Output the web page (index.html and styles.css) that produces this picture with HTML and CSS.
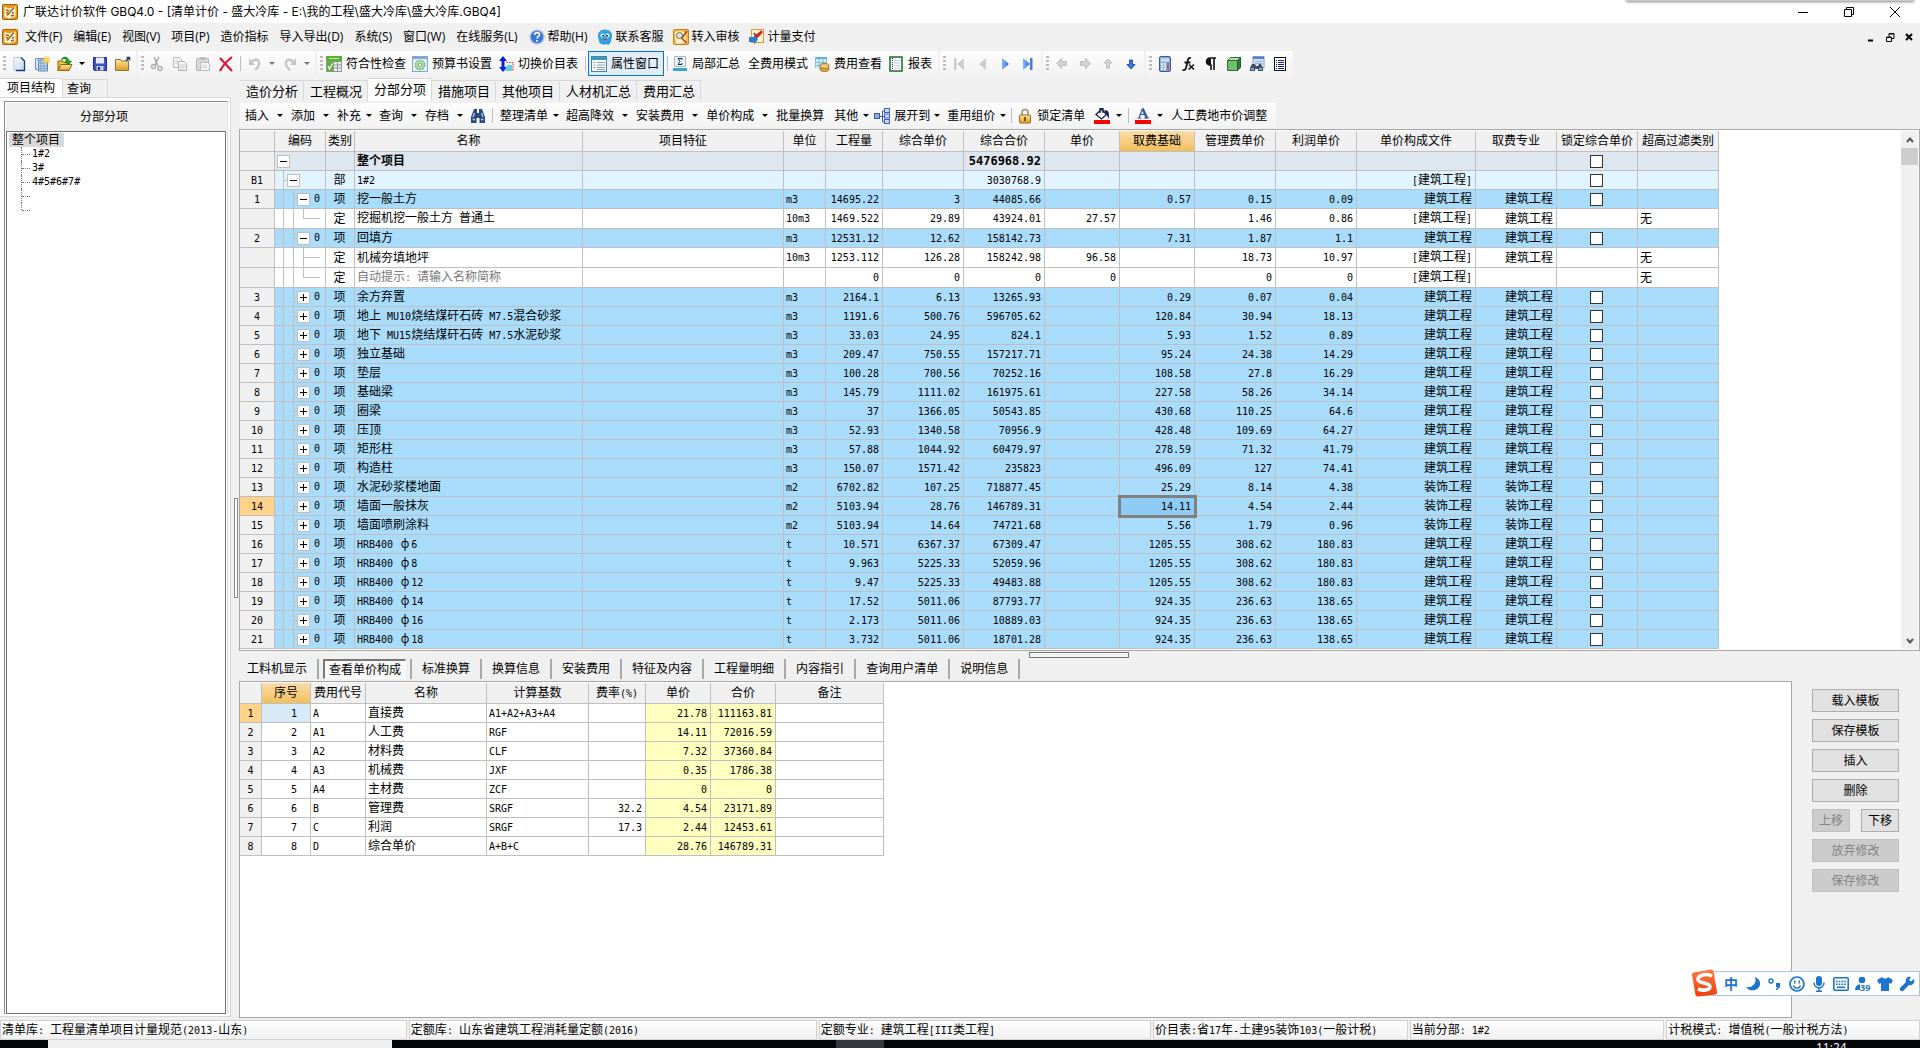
FILE: index.html
```html
<!DOCTYPE html>
<html lang="zh-CN">
<head>
<meta charset="utf-8">
<title>广联达计价软件 GBQ4.0</title>
<link rel="stylesheet" href="styles.css">
</head>
<body>
<svg class="sprite" aria-hidden="true">
  <defs>
    <linearGradient id="g-paper" x1="0" y1="0" x2="1" y2="1"><stop offset="0" stop-color="#fff"/><stop offset="1" stop-color="#b9d3ee"/></linearGradient>
    <linearGradient id="g-gold" x1="0" y1="0" x2="0" y2="1"><stop offset="0" stop-color="#ffe9a0"/><stop offset="1" stop-color="#dc9a20"/></linearGradient>
    <linearGradient id="g-blue" x1="0" y1="0" x2="1" y2="0"><stop offset="0" stop-color="#8cb8ff"/><stop offset="1" stop-color="#2f62d8"/></linearGradient>
    <linearGradient id="g-logo" x1="0" y1="0" x2="0" y2="1"><stop offset="0" stop-color="#ff7a45"/><stop offset="1" stop-color="#ee3f0a"/></linearGradient>
  </defs>
  <symbol id="app" viewBox="0 0 16 16"><rect x=".5" y=".5" width="15" height="15" rx="1" fill="#e8951c" stroke="#a85f08"/><path d="M2.500 3l5 1.500 6-2v10l-6 2-5-1.500z" fill="#fff6dc"/><path d="M4 6l3 .8M4 8.500l2 .6M5 11.500l7-8M9 12l3-1M10 9l2-.5" stroke="#9a5a10" stroke-width="1.400" fill="none"/></symbol>
  <symbol id="new" viewBox="0 0 16 16"><path d="M3 1.500h7l3.500 3.500v9.500H3z" fill="url(#g-paper)" stroke="#b5c4d6"/><path d="M10 1.500l3.500 3.500v9.500H5" fill="none" stroke="#173f73" stroke-width="1.300"/></symbol>
  <symbol id="newp" viewBox="0 0 16 16"><path d="M1.500 2.500h9v11h-9z" fill="#dbe8f7" stroke="#6d8fbe"/><path d="M4.500 4h9v11h-9z" fill="#c5d9f0" stroke="#5b7fb3"/><path d="M7 4v11M10 4v11M4 7h9M4 10h9M4 12.500h9" stroke="#7d9fd0"/><path d="M12.500 0v8M8.500 4h8M9.700 1.200l5.600 5.600M15.300 1.200L9.700 6.800" stroke="#ffd24a" stroke-width="1.500"/></symbol>
  <symbol id="open" viewBox="0 0 16 16"><path d="M1 14.500V5h5l1 1.500h5V9" fill="#f2c043" stroke="#8a6414"/><path d="M1 14.500L4 8.500h11l-3 6z" fill="url(#g-gold)" stroke="#8a6414"/><path d="M4 4c2-4 7-4 8 1h2.500L11 9 8 5h2C9 2.500 6.500 2 4 4z" fill="#21a321" stroke="#0c6b0c" stroke-width=".6"/></symbol>
  <symbol id="save" viewBox="0 0 16 16"><path d="M1.500 1.500h13v13h-12l-1-1z" fill="#3d52c4" stroke="#1d2c86"/><path d="M4 1.500h8v6H4z" fill="#e7ecf8"/><path d="M4.500 10h7v4.500h-7z" fill="#c9cfe4"/><path d="M6 11h2v3H6z" fill="#1d2c86"/></symbol>
  <symbol id="folder" viewBox="0 0 16 16"><path d="M.5 3.500h5l1 1.500h7v9.500H.5z" fill="url(#g-gold)" stroke="#94752b"/><path d="M11 5l3-3.500M11.500 1.500h3v3" stroke="#263a66" stroke-width="1.500" fill="none"/></symbol>
  <symbol id="cut" viewBox="0 0 16 16"><path d="M5 1l4 9M10 1L6 9" stroke="#aaa" stroke-width="1.600"/><circle cx="4.500" cy="10.500" r="2" fill="none" stroke="#b0b0b0" stroke-width="1.500"/><circle cx="11" cy="12.500" r="2" fill="none" stroke="#b0b0b0" stroke-width="1.500"/></symbol>
  <symbol id="copy" viewBox="0 0 16 16"><path d="M1.500 1.500h6l2 2v8h-8z" fill="#f4f4f4" stroke="#bbb"/><path d="M6.500 5.500h6l2 2v7h-8z" fill="#f4f4f4" stroke="#b0b0b0"/><path d="M8 9h5M8 11h5M8 13h4M3 5h3M3 7h3" stroke="#ccc"/></symbol>
  <symbol id="paste" viewBox="0 0 16 16"><rect x="1.500" y="2.500" width="12" height="12" rx="1" fill="#d8d8d8" stroke="#b0b0b0"/><path d="M5 1h5v3H5z" fill="#bbb"/><path d="M5.500 6.500h7l2 2v6h-9z" fill="#f6f6f6" stroke="#b8b8b8"/><path d="M7 9.500h5M7 11.500h5" stroke="#ccc"/></symbol>
  <symbol id="del" viewBox="0 0 16 16"><path d="M2 2l12 13M14 1C9 5 5 9 2 15" stroke="#dc143c" stroke-width="2.200" fill="none"/></symbol>
  <symbol id="undo" viewBox="0 0 16 16"><path d="M4 7c3-5 9-4 8 1 0 3-2 4-4 6" fill="none" stroke="#c6c6c6" stroke-width="2.400"/><path d="M2 2v7h6z" fill="#c6c6c6"/></symbol>
  <symbol id="redo" viewBox="0 0 16 16"><path d="M12 7C9 2 3 3 4 8c0 3 2 4 4 6" fill="none" stroke="#c6c6c6" stroke-width="2.400"/><path d="M14 2v7H8z" fill="#c6c6c6"/></symbol>
  <symbol id="check" viewBox="0 0 16 16"><path d="M0 0h16v5H0z" fill="#58b030"/><path d="M3 2.500h10" stroke="#c8ecb4"/><path d="M.5 5.500h15v10H.5z" fill="#eef1f1"/><path d="M.5 5.500h15v10H.5zM0 9h16M0 12h16M7.500 5v11M11.500 5v11" stroke="#8d9494" fill="none"/><path d="M1 6h6v9H1z" fill="#58b030"/><path d="M2 10l1.500 3L6.500 7.500" stroke="#fff" stroke-width="1.300" fill="none"/></symbol>
  <symbol id="sett" viewBox="0 0 16 16"><rect x=".5" y=".5" width="15" height="15" fill="#e4effa" stroke="#82a7d2"/><path d="M1 1h14v2H1z" fill="#7fa9dc"/><circle cx="8" cy="9" r="4.500" fill="#bfe4bd" stroke="#6db56a" stroke-width="1.600" stroke-dasharray="2 .8"/><circle cx="8" cy="9" r="1.800" fill="#fff" stroke="#6db56a"/></symbol>
  <symbol id="swap" viewBox="0 0 16 16"><path d="M5 0l4 5H6.500v6H9l-4 5-4-5h2.500V5H1z" fill="#0c1ee0"/><path d="M8.500 6.500h6.500v8H9" fill="none" stroke="#e02020" stroke-dasharray="1.500 1"/><path d="M9 9h5v6H7z" fill="#5fd0dc"/></symbol>
  <symbol id="prop" viewBox="0 0 16 16"><rect x=".5" y=".5" width="15" height="15" fill="#fff" stroke="#4f7fae"/><path d="M1 1h14v3H1z" fill="#2fa3b5"/><path d="M2.500 6.500h2M2.500 9h2M2.500 11.500h2M6 6.500h8M6 9h8M6 11.500h8M6 13.500h8" stroke="#8a9cab"/></symbol>
  <symbol id="sum" viewBox="0 0 16 16"><path d="M2.500.5h11v10h-11z" fill="#eaf4f8" stroke="#a4bac6"/><path d="M10 4V2.500H6L8 5.500 6 8.500h4V7" fill="none" stroke="#1e3246"/><path d="M1 12h14v3H1z" fill="#39a5c4"/></symbol>
  <symbol id="feev" viewBox="0 0 16 16"><path d="M1 1h12v11H1z" fill="#d5ecf8"/><path d="M1 1h12v2H1z" fill="#55b4dd"/><path d="M1.500 1v11M1 6.500h12M1 9.500h12M5 3v9M9 3v9M12.500 3v9" stroke="#7fbfdd"/><ellipse cx="10.500" cy="13" rx="4.500" ry="2.500" fill="#dca54a" stroke="#a97420"/><ellipse cx="10.500" cy="10" rx="4.500" ry="2.500" fill="#f0c678" stroke="#a97420"/></symbol>
  <symbol id="report" viewBox="0 0 16 16"><rect x="2" y="1" width="12" height="14" fill="#fff" stroke="#1c6b2a" stroke-width="1.500"/><path d="M4.500 2v12" stroke="#333" stroke-dasharray="1 1"/><path d="M6 4.500h6M6 7h6M6 9.500h6M6 12h6" stroke="#b9c9de"/></symbol>
  <symbol id="first" viewBox="0 0 16 16"><path d="M3 2h2.500v12H3zM13 2v12L6 8z" fill="#cdcdcd"/></symbol>
  <symbol id="prev" viewBox="0 0 16 16"><path d="M12 2v12L5 8z" fill="#cdcdcd"/></symbol>
  <symbol id="next" viewBox="0 0 16 16"><path d="M5 2v12l7-6z" fill="url(#g-blue)"/></symbol>
  <symbol id="last" viewBox="0 0 16 16"><path d="M3 2v12l7-6z" fill="url(#g-blue)"/><path d="M10 2h2.500v12H10z" fill="#4a78dc"/></symbol>
  <symbol id="al" viewBox="0 0 16 16"><path d="M2.500 7.500l5-5v3h5v4h-5v3z" fill="#d4d4d4" stroke="#bdbdbd"/></symbol>
  <symbol id="ar" viewBox="0 0 16 16"><path d="M13.500 7.500l-5-5v3h-5v4h5v3z" fill="#d4d4d4" stroke="#bdbdbd"/></symbol>
  <symbol id="au" viewBox="0 0 16 16"><path d="M8 3l4 4H9.500v5h-3V7H4z" fill="#d4d4d4" stroke="#bdbdbd"/></symbol>
  <symbol id="ad" viewBox="0 0 16 16"><path d="M8 13l4-4.500H9.500V4h-3v4.500H4z" fill="#3f76e4" stroke="#2452b8"/></symbol>
  <symbol id="calc" viewBox="0 0 16 16"><rect x="2.500" y=".5" width="11" height="15" rx="1.500" fill="#8dace0" stroke="#39588f"/><path d="M4 2.500h8v3H4z" fill="#cfdff5"/><path d="M4 8h2M7 8h2M4 10.500h2M7 10.500h2M4 13h2M7 13h2" stroke="#fff" stroke-width="1.500"/><path d="M10 8h2M10 10.500h2M10 13h2" stroke="#c03030" stroke-width="1.500"/></symbol>
  <symbol id="fx" viewBox="0 0 16 16"><path d="M11 2C8 1 8 4 7 8s-1 7-4.500 6M4.500 6.500h6" fill="none" stroke="#111" stroke-width="1.800"/><path d="M9 8.500l5 5M14 8.500l-5.500 5" stroke="#111" stroke-width="1.500"/></symbol>
  <symbol id="para" viewBox="0 0 16 16"><path d="M13 2H7a3.500 3.500 0 000 7h1v5M11 2v12" fill="none" stroke="#111" stroke-width="1.600"/><path d="M8 2.500H6.500a3 3 0 000 6H8z" fill="#111"/></symbol>
  <symbol id="cube" viewBox="0 0 16 16"><path d="M1.500 4.500h10v10h-10z" fill="#6fbf6f" stroke="#2e6f2e"/><path d="M1.500 4.500l3-3h10l-3 3z" fill="#b4e0b0" stroke="#2e6f2e"/><path d="M11.500 4.500l3-3v10l-3 3z" fill="#2f7a35" stroke="#225a28"/></symbol>
  <symbol id="find" viewBox="0 0 16 16"><path d="M4 .5h11v11H4z" fill="#dce8f8" stroke="#7c9cd0"/><path d="M4 1h11v2H4z" fill="#4f7fd6"/><path d="M6 5.500h7M6 7.500h7" stroke="#8fabd6"/><path d="M3 8h3l1 2h2l1-2h2l2 4v3H9v-2H6v2H1v-3z" fill="#3c4f66"/><path d="M2 13h3M10 13h3" stroke="#9ec4e8" stroke-width="1.500"/></symbol>
  <symbol id="list" viewBox="0 0 16 16"><rect x="2.500" y="1.500" width="11" height="13" fill="#fff" stroke="#111"/><path d="M4 4.500h1M4 6.500h1M4 8.500h1M4 10.500h1M4 12.500h1M6 4.500h6M6 6.500h6M6 8.500h6M6 10.500h6M6 12.500h6" stroke="#1a1a9a"/></symbol>
  <symbol id="bino" viewBox="0 0 16 16"><path d="M4 1h3v4h2V1h3l3 8v6H9.500v-5h-3v5H1V9z" fill="#2c4b7c"/><path d="M3 9l1.500-4M13 9l-1.500-4M2.500 11.500h2.500M11 11.500h2.500" stroke="#a8c4ee" stroke-width="1.400"/></symbol>
  <symbol id="tree" viewBox="0 0 16 16"><path d="M5 8.500h3M8.500 3v11M8.500 3h2M8.500 8.500h2M8.500 14h2" stroke="#3a5c9c" fill="none"/><rect x=".5" y="5.500" width="5" height="5" fill="#8eb0ea" stroke="#3a5c9c"/><rect x="10.500" y=".5" width="5" height="4" fill="#c9dcf8" stroke="#3a62ac"/><rect x="10.500" y="6" width="5" height="4" fill="#c9dcf8" stroke="#3a62ac"/><rect x="10.500" y="11.500" width="5" height="4" fill="#c9dcf8" stroke="#3a62ac"/></symbol>
  <symbol id="lock" viewBox="0 0 16 16"><path d="M5 8V4.500a3 3 0 016 0V8" fill="none" stroke="#b0a58c" stroke-width="2"/><rect x="2.500" y="7" width="11" height="8" rx="1" fill="url(#g-gold)" stroke="#9a6a14"/><path d="M8 9v4" stroke="#5c3d06" stroke-width="1.600"/></symbol>
  <symbol id="fill" viewBox="0 0 16 16"><path d="M0 12h16v4H0z" fill="red"/><path d="M2 6.500l5.500-5 5 5-5 4.500z" fill="#fff" stroke="#15204a" stroke-width="1.300"/><path d="M6 5V.7h3V5" fill="none" stroke="#15204a" stroke-width="1.300"/><path d="M10 2.500c4-1 6 2 4.500 8.500-1-2-1-3-2-4.500z" fill="#15204a"/></symbol>
  <symbol id="fontc" viewBox="0 0 16 16"><path d="M0 12h16v4H0z" fill="red"/><path d="M4 9.500L7.500 1" stroke="#2f569c" stroke-width="1.200"/><path d="M7.500.5L12 10" stroke="#2f569c" stroke-width="2.400"/><path d="M5 6.500h6M2.500 10h4M9 10h5" stroke="#2f569c" stroke-width="1.200"/></symbol>
  <symbol id="help" viewBox="0 0 16 16"><circle cx="8" cy="8" r="7" fill="#3d74d8" stroke="#b7c9ea" stroke-width="1.500"/><path d="M5.500 6c0-3.500 5.500-3 5 0-.3 1.500-2.500 1.500-2.500 3.500M8 11v1.800" fill="none" stroke="#fff" stroke-width="1.700"/></symbol>
  <symbol id="serv" viewBox="0 0 16 16"><path d="M2 10C0 4 3 1 8 1s8 3 6 9l-1 4-2 1.500-2-1-2 1-2-1-2-.5z" fill="#2aa5ea" stroke="#1379b8" stroke-width=".6"/><circle cx="5.500" cy="6.500" r="2" fill="#fff"/><circle cx="10.500" cy="6.500" r="2" fill="#fff"/><circle cx="6" cy="6.800" r="1" fill="#123"/><circle cx="10" cy="6.800" r="1" fill="#123"/><path d="M6.500 10.500h3" stroke="#e23" stroke-width="1.400"/></symbol>
  <symbol id="audit" viewBox="0 0 16 16"><rect x=".5" y=".5" width="15" height="15" rx="1" fill="#f6b548" stroke="#c97d14"/><path d="M2 3l6-1 5 2-1 10-9 1z" fill="#fff3d4"/><circle cx="6.500" cy="6.500" r="3" fill="#cfe6f8" stroke="#8a6220"/><path d="M8.500 9l5 5M14 2L9 9" stroke="#b04a10" stroke-width="1.700"/></symbol>
  <symbol id="pay" viewBox="0 0 16 16"><rect x="2.500" y=".5" width="12" height="13" fill="#fff3da" stroke="#e09a30"/><path d="M5 4l2 3 6-5M6 10l7-7" stroke="#c8281c" stroke-width="2" fill="none"/><path d="M0 8h5V5.500L9 10.500 5 15.500V13H0z" fill="#2b7cd0"/></symbol>
  <symbol id="moon" viewBox="0 0 16 16"><path d="M10 1a7.500 7.500 0 01-9 10c3 5 12 4.500 14-2 1-3.500-2-7-5-8z" fill="#1c74cc"/></symbol>
  <symbol id="punct" viewBox="0 0 16 16"><circle cx="4" cy="5" r="2" fill="none" stroke="#1c74cc" stroke-width="1.400"/><path d="M9 7h4v4l-3 3H8.500L10.500 11H9z" fill="#1c74cc"/></symbol>
  <symbol id="smile" viewBox="0 0 16 16"><circle cx="8" cy="8" r="7" fill="#fff" stroke="#1c74cc" stroke-width="1.700"/><path d="M5.800 4.500v3M10.200 4.500v3M4.500 9.500c1 3.500 6 3.500 7 0" fill="none" stroke="#1c74cc" stroke-width="1.400"/></symbol>
  <symbol id="mic" viewBox="0 0 16 16"><rect x="5" y="0" width="6" height="10" rx="3" fill="#1c74cc"/><path d="M3 6.500c0 7 10 7 10 0M8 12v3M5 15.200h6" fill="none" stroke="#1c74cc" stroke-width="1.500"/></symbol>
  <symbol id="kb" viewBox="0 0 16 16"><rect x=".8" y="1.800" width="14.400" height="12.400" rx="1" fill="#fff" stroke="#1c74cc" stroke-width="1.600"/><path d="M3 5.500h10M3 8.200h10" stroke="#1c74cc" stroke-width="1.500" stroke-dasharray="1.700 1"/><path d="M4 11.300h8" stroke="#1c74cc" stroke-width="1.600"/></symbol>
  <symbol id="user" viewBox="0 0 16 16"><circle cx="7" cy="4" r="3.300" fill="#1c74cc"/><path d="M0 14c0-8 13-8 13 0z" fill="#1c74cc"/></symbol>
  <symbol id="shirt" viewBox="0 0 16 16"><path d="M5 1c1 2 5 2 6 0l5 3-2 4-2-1v8H4V7L2 8 0 4z" fill="#1c74cc"/></symbol>
  <symbol id="wrench" viewBox="0 0 16 16"><path d="M15 3l-3 2.500-2-1.500L12 1C8-.5 6 3 7 6L1 12c-1 2 1 4 3 3l6-6c3 1 6.500-2 5-6z" fill="#1c74cc"/></symbol>
</svg>

<header class="titlebar">
  <svg class="ic"><use href="#app"/></svg>
  <h1>广联达计价软件 GBQ4.0 - [清单计价 - 盛大冷库 - E:\我的工程\盛大冷库\盛大冷库.GBQ4]</h1>
  <div class="winctl">
    <button aria-label="最小化"><svg viewBox="0 0 10 10"><path d="M0 5.500h10"/></svg></button>
    <button aria-label="还原"><svg viewBox="0 0 10 10"><path d="M.5 2.500h7v7h-7zM2.500 2.500v-2h7v7h-2"/></svg></button>
    <button aria-label="关闭"><svg viewBox="0 0 10 10"><path d="M0 0l10 10M10 0L0 10"/></svg></button>
  </div>
  <div class="shade"></div>
</header>

<nav class="menubar">
  <svg class="ic"><use href="#app"/></svg>
  <button>文件(F)</button><button>编辑(E)</button><button>视图(V)</button><button>项目(P)</button><button>造价指标</button><button>导入导出(D)</button><button>系统(S)</button><button>窗口(W)</button><button>在线服务(L)</button>
  <button><svg class="ic"><use href="#help"/></svg>帮助(H)</button>
  <button><svg class="ic"><use href="#serv"/></svg>联系客服</button>
  <button><svg class="ic"><use href="#audit"/></svg>转入审核</button>
  <button><svg class="ic"><use href="#pay"/></svg>计量支付</button>
  <div class="mdictl">
    <button aria-label="最小化子窗口"><svg viewBox="0 0 9 9"><path d="M1 7.500h5" stroke-width="2"/></svg></button>
    <button aria-label="还原子窗口"><svg viewBox="0 0 9 9"><path d="M.5 4.500h5v4h-5zM.5 4h5M3 3.500v-3h5v5H6M3 1h5"/></svg></button>
    <button aria-label="关闭子窗口"><svg viewBox="0 0 9 9"><path d="M1 1l6 6M7 1L1 7" stroke-width="2"/></svg></button>
  </div>
</nav>

<div class="toolrow">
  <div class="group"><i class="grip"></i>
    <button class="sq" aria-label="新建"><svg class="ic"><use href="#new"/></svg></button><button class="sq" aria-label="新建项目"><svg class="ic"><use href="#newp"/></svg></button><button class="sq" aria-label="打开"><svg class="ic"><use href="#open"/></svg></button><button class="arr" aria-label="最近文件"></button><button class="sq" aria-label="保存"><svg class="ic"><use href="#save"/></svg></button><button class="sq" aria-label="目录"><svg class="ic"><use href="#folder"/></svg></button>
  </div>
  <div class="group"><i class="grip"></i>
    <button class="sq" aria-label="剪切"><svg class="ic"><use href="#cut"/></svg></button><button class="sq" aria-label="复制"><svg class="ic"><use href="#copy"/></svg></button><button class="sq" aria-label="粘贴"><svg class="ic"><use href="#paste"/></svg></button><button class="sq" aria-label="删除"><svg class="ic"><use href="#del"/></svg></button><i class="sep"></i><button class="sq" aria-label="撤销"><svg class="ic"><use href="#undo"/></svg></button><button class="arr dim" aria-label="撤销列表"></button><button class="sq" aria-label="恢复"><svg class="ic"><use href="#redo"/></svg></button><button class="arr dim" aria-label="恢复列表"></button>
  </div>
  <div class="group"><i class="grip"></i>
    <button class="tool"><svg class="ic"><use href="#check"/></svg>符合性检查</button><button class="tool"><svg class="ic"><use href="#sett"/></svg>预算书设置</button><button class="tool"><svg class="ic"><use href="#swap"/></svg>切换价目表</button><i class="sep"></i><button class="tool on"><svg class="ic"><use href="#prop"/></svg>属性窗口</button><i class="sep"></i><button class="tool"><svg class="ic"><use href="#sum"/></svg>局部汇总</button><button class="tool">全费用模式</button><button class="tool"><svg class="ic"><use href="#feev"/></svg>费用查看</button><button class="tool"><svg class="ic"><use href="#report"/></svg>报表</button>
  </div>
  <div class="group"><i class="grip"></i>
    <button class="sq" aria-label="首条"><svg class="ic"><use href="#first"/></svg></button><button class="sq" aria-label="上一条"><svg class="ic"><use href="#prev"/></svg></button><button class="sq" aria-label="下一条"><svg class="ic"><use href="#next"/></svg></button><button class="sq" aria-label="末条"><svg class="ic"><use href="#last"/></svg></button>
  </div>
  <div class="group"><i class="grip"></i>
    <button class="sq" aria-label="升级"><svg class="ic"><use href="#al"/></svg></button><button class="sq" aria-label="降级"><svg class="ic"><use href="#ar"/></svg></button><button class="sq" aria-label="上移行"><svg class="ic"><use href="#au"/></svg></button><button class="sq" aria-label="下移行"><svg class="ic"><use href="#ad"/></svg></button>
  </div>
  <div class="group"><i class="grip"></i>
    <button class="sq" aria-label="计算器"><svg class="ic"><use href="#calc"/></svg></button><button class="sq" aria-label="函数"><svg class="ic"><use href="#fx"/></svg></button><button class="sq" aria-label="段落"><svg class="ic"><use href="#para"/></svg></button><button class="sq" aria-label="图元"><svg class="ic"><use href="#cube"/></svg></button><button class="sq" aria-label="查找"><svg class="ic"><use href="#find"/></svg></button><button class="sq" aria-label="列表"><svg class="ic"><use href="#list"/></svg></button>
  </div>
</div>

<main class="work">
  <aside class="side">
    <div class="sidetabs"><button class="on">项目结构</button><button>查询</button></div>
    <div class="sidepage">
      <section class="sidebox">
        <h2>分部分项</h2>
        <div class="treebox">
          <a class="root" href="#root">整个项目</a>
          <ul>
            <li><a class="m" href="#a">1#2</a></li>
            <li><a class="m" href="#b">3#</a></li>
            <li><a class="m" href="#c">4#5#6#7#</a></li>
            <li></li>
            <li></li>
          </ul>
        </div>
      </section>
    </div>
  </aside>
  <div class="vsplit"><i></i></div>

  <div class="content">
    <div class="maintabs"><button>造价分析</button><button>工程概况</button><button class="on">分部分项</button><button>措施项目</button><button>其他项目</button><button>人材机汇总</button><button>费用汇总</button></div>
    <div class="subrow"><div class="group">
      <button class="tool">插入</button><button class="arr" aria-label="插入选项"></button><button class="tool">添加</button><button class="arr" aria-label="添加选项"></button><button class="tool drop">补充</button><button class="tool">查询</button><button class="arr" aria-label="查询选项"></button><button class="tool">存档</button><button class="arr" aria-label="存档选项"></button><button class="sq" aria-label="查找"><svg class="ic"><use href="#bino"/></svg></button><i class="sep"></i><button class="tool drop">整理清单</button><button class="tool">超高降效</button><button class="arr" aria-label="超高降效选项"></button><button class="tool">安装费用</button><button class="arr" aria-label="安装费用选项"></button><button class="tool">单价构成</button><button class="arr" aria-label="单价构成选项"></button><button class="tool">批量换算</button><button class="tool drop">其他</button><button class="tool drop"><svg class="ic"><use href="#tree"/></svg>展开到</button><button class="tool drop">重用组价</button><i class="sep"></i><button class="tool"><svg class="ic"><use href="#lock"/></svg>锁定清单</button><button class="sq" aria-label="填充颜色"><svg class="ic"><use href="#fill"/></svg></button><button class="arr" aria-label="填充颜色选项"></button><i class="sep"></i><button class="sq" aria-label="字体颜色"><svg class="ic"><use href="#fontc"/></svg></button><button class="arr" aria-label="字体颜色选项"></button><button class="tool">人工费地市价调整</button>
    </div></div>

    <div class="gridbox">
      <div class="gridscroll">
        <table class="grid bill">
          <colgroup><col><col><col><col><col><col><col><col><col><col><col><col><col><col><col><col><col></colgroup>
          <thead><tr><th></th><th>编码</th><th>类别</th><th>名称</th><th>项目特征</th><th>单位</th><th>工程量</th><th>综合单价</th><th>综合合价</th><th>单价</th><th class="cur">取费基础</th><th>管理费单价</th><th>利润单价</th><th>单价构成文件</th><th>取费专业</th><th>锁定综合单价</th><th>超高过滤类别</th></tr></thead>
          <tbody id="bill"></tbody>
        </table>
      </div>
      <div class="scroll">
        <button aria-label="向上滚动"><svg viewBox="0 0 8 8"><path d="M1 6l3-3.500L7 6"/></svg></button>
        <i></i>
        <button class="end" aria-label="向下滚动"><svg viewBox="0 0 8 8"><path d="M1 2l3 3.500L7 2"/></svg></button>
      </div>
    </div>

    <div class="lower">
      <div class="hsplit"></div>
      <div class="lowtabs"><button>工料机显示</button><button class="on">查看单价构成</button><button>标准换算</button><button>换算信息</button><button>安装费用</button><button>特征及内容</button><button>工程量明细</button><button>内容指引</button><button>查询用户清单</button><button>说明信息</button></div>
    </div>

    <div class="detail">
      <div class="detailbox">
        <table class="grid fee">
          <colgroup><col><col><col><col><col><col><col><col><col></colgroup>
          <thead><tr><th></th><th class="cur">序号</th><th>费用代号</th><th>名称</th><th>计算基数</th><th>费率<span class="m">(%)</span></th><th>单价</th><th>合价</th><th>备注</th></tr></thead>
          <tbody id="fee"></tbody>
        </table>
      </div>
      <div class="actions">
        <button>载入模板</button><button>保存模板</button><button>插入</button><button>删除</button>
        <div><button disabled>上移</button><button>下移</button></div>
        <button disabled>放弃修改</button><button disabled>保存修改</button>
      </div>
    </div>
  </div>
</main>

<footer class="status">
  <span>清单库<span class="m">: </span>工程量清单项目计量规范<span class="m">(2013-</span>山东<span class="m">)</span></span>
  <span>定额库<span class="m">: </span>山东省建筑工程消耗量定额<span class="m">(2016)</span></span>
  <span>定额专业<span class="m">: </span>建筑工程<span class="m">[III</span>类工程<span class="m">]</span></span>
  <span>价目表<span class="m">:</span>省<span class="m">17</span>年<span class="m">-</span>土建<span class="m">95</span>装饰<span class="m">103(</span>一般计税<span class="m">)</span></span>
  <span>当前分部<span class="m">: 1#2</span></span>
  <span>计税模式<span class="m">: </span>增值税<span class="m">(</span>一般计税方法<span class="m">)</span></span>
</footer>
<div class="taskbar"><i class="win"></i><i class="act"></i><time>11:24</time></div>

<div class="ime">
  <svg class="logo" viewBox="0 0 28 28"><path d="M2 6q-.5-2 1.500-2.500L21 .5q2-.4 2.500 1.500L27 23q.3 2-1.500 2.500L8 27.500q-2 .3-2.500-1.500z" fill="url(#g-logo)"/><path d="M22 7C16 4 8 6 8 10.500c0 4 12 3 12 7 0 4-7 4.500-12 2.500" fill="none" stroke="#fff" stroke-width="3.600"/></svg>
  <button class="zh">中</button>
  <button aria-label="半角"><svg class="ic"><use href="#moon"/></svg></button>
  <button aria-label="标点"><svg class="ic"><use href="#punct"/></svg></button>
  <button aria-label="表情"><svg class="ic"><use href="#smile"/></svg></button>
  <button aria-label="语音"><svg class="ic"><use href="#mic"/></svg></button>
  <button aria-label="软键盘"><svg class="ic"><use href="#kb"/></svg></button>
  <button aria-label="账户" class="acct"><svg class="ic"><use href="#user"/></svg><b>39</b></button>
  <button aria-label="皮肤"><svg class="ic"><use href="#shirt"/></svg></button>
  <button aria-label="工具箱"><svg class="ic"><use href="#wrench"/></svg></button>
</div>
<script src="app.js"></script>
</body>
</html>
```
FILE: styles.css
```css
* { box-sizing: border-box; }
body {
  margin: 0;
  height: 100vh;
  overflow: hidden;
  display: flex;
  flex-direction: column;
  background: #f0f0f0;
  color: #000;
  font: 12px/16px "Open Sans", "Noto Sans CJK SC", sans-serif;
}
button {
  font: inherit;
  color: inherit;
  background: none;
  border: 0;
  padding: 0;
  margin: 0;
  white-space: nowrap;
}
h1, h2 { margin: 0; font: inherit; }
a { color: inherit; text-decoration: none; }
.sprite { position: absolute; width: 0; height: 0; }
.ic { width: 16px; height: 16px; flex: none; display: block; }
.m { font-family: "DejaVu Sans Mono", monospace; font-size: 10px; white-space: pre; }
.w { display: inline-block; width: 12px; text-align: center; }

/* window title */
.titlebar {
  position: relative;
  flex: none;
  height: 23px;
  display: flex;
  align-items: center;
  background: #fff;
  padding-left: 2px;
  gap: 5px;
}
.titlebar h1 { font-family: Inter, "Noto Sans CJK SC", sans-serif; }
.winctl { margin-left: auto; display: flex; padding-right: 2px; }
.winctl button { width: 46px; height: 20px; display: flex; align-items: center; justify-content: center; }
.winctl svg { width: 10px; height: 10px; fill: none; stroke: #000; }
.shade {
  position: absolute;
  right: 6px;
  top: -4px;
  width: 288px;
  height: 5px;
  background: #ccc;
  box-shadow: 0 1px 3px #888;
}

/* menu */
.menubar { flex: none; height: 28px; display: flex; align-items: center; padding-left: 2px; }
.menubar > .ic { margin-right: 2px; }
.menubar button { padding: 0 6px 0 5px; display: flex; align-items: center; gap: 3px; }
.menubar button:has(.ic) { padding: 0 4px 0 5px; }
.menubar .mdictl { margin-left: auto; display: flex; padding-right: 1px; }
.menubar .mdictl button { padding: 0 5px; }
.mdictl svg { width: 9px; height: 9px; fill: none; stroke: #000; stroke-width: 1; display: block; }

/* tool bars */
.toolrow { flex: none; height: 27px; display: flex; gap: 2px; align-items: flex-start; }
.group {
  display: flex;
  align-items: stretch;
  height: 25px;
  padding-right: 2px;
  background: linear-gradient(#fdfdfd, #f2f2f2);
}
.grip {
  width: 3px;
  margin: 5px 1px 5px 3px;
  background: repeating-linear-gradient(#bbb 0 2px, transparent 2px 4px);
}
.sep { width: 1px; margin: 5px 2px 5px 3px; background: #bdbdbd; }
.sq { width: 23px; display: flex; align-items: center; justify-content: center; }
.arr { width: 12px; display: flex; align-items: center; justify-content: center; }
.arr::before, .drop::after {
  content: "";
  border: 3px solid transparent;
  border-top-color: #000;
  border-bottom-width: 0;
}
.arr.dim::before { border-top-color: #777; }
.tool { display: flex; align-items: center; gap: 4px; padding: 0 4px; }
.tool:has(.ic) { padding-left: 2px; }
.tool.on { border: 1px solid #0078d7; background: #e1eefa; }

/* project tree pane */
.work { flex: 1; min-height: 0; display: flex; }
.side { width: 231px; flex: none; display: flex; flex-direction: column; padding-bottom: 1px; }
.sidetabs { display: flex; align-items: flex-end; height: 19px; }
.sidetabs button { height: 18px; padding: 0 16px 0 4px; border: 1px solid #d9d9d9; border-bottom: 0; border-left: 0; }
.sidetabs .on { height: 19px; padding: 0 7px; background: #fff; }
.sidepage { flex: 1; min-height: 0; display: flex; background: #fff; border: 1px solid #d9d9d9; border-left: 0; padding: 3px 2px 2px 4px; }
.sidebox { flex: 1; display: flex; flex-direction: column; border: 1px solid #868a90; border-right-color: #d9d9d9; border-bottom: 0; }
.sidebox h2 { height: 28px; margin: 1px 1px 0; line-height: 28px; text-align: center; background: #f0f0f0; padding-right: 24px; }
.treebox { flex: 1; margin: 0 1px 0 1px; border: 1px solid #70747a; padding: 1px 2px; line-height: 14px; }
.root { display: inline-block; padding: 0 4px 0 3px; background: #d9d9d9; }
.treebox ul { list-style: none; margin: 0 0 0 12px; padding: 0; }
.treebox li { height: 14px; border-left: 1px dotted #777; display: flex; gap: 2px; }
.treebox li::before { content: ""; width: 8px; height: 7px; border-bottom: 1px dotted #777; }
.treebox li:last-child { height: 7px; }

.vsplit { width: 8px; flex: none; display: flex; align-items: center; padding-left: 3px; }
.vsplit i { width: 4px; height: 100px; border: 1px solid #8a8a8a; background: #fff; }

/* main pane */
.content { flex: 1; min-width: 0; display: flex; flex-direction: column; }
.maintabs { display: flex; align-items: flex-end; height: 23px; padding-left: 1px; font-size: 13px; }
.maintabs button { height: 21px; padding: 0 5px 0 6px; border: 1px solid #d9d9d9; border-width: 1px 1px 0 0; }
.maintabs .on { height: 23px; background: #fff; padding-bottom: 3px; }
.subrow { height: 28px; display: flex; padding: 2px 0 0 1px; }
.subrow .group { padding-right: 4px; }
.subrow .tool { padding: 0 5px; }
.subrow .tool:has(.ic) { padding-left: 3px; }
.subrow .drop { gap: 5px; padding-right: 2px; }
.subrow .drop:has(.ic) { gap: 4px; padding-right: 2px; }

.gridbox { display: flex; justify-content: space-between; background: #fff; border: 1px solid #a6a6a6; padding: 1px 1px 1px 0; }
.gridscroll { flex: 1; min-width: 0; overflow: hidden; }
.scroll { width: 17px; flex: none; display: flex; flex-direction: column; background: #f0f0f0; }
.scroll button { height: 17px; display: flex; align-items: center; justify-content: center; }
.scroll svg { width: 8px; height: 8px; fill: none; stroke: #555; stroke-width: 2; }
.scroll i { height: 17px; background: #cdcdcd; }
.scroll .end { margin-top: auto; }

.grid { table-layout: fixed; border-collapse: separate; border-spacing: 0; line-height: 16px; }
.grid th, .grid td { padding: 0 3px 0 2px; border: 1px solid #bfbfbf; border-width: 0 1px 1px 0; overflow: hidden; white-space: nowrap; }
.grid th { height: 21px; font-weight: normal; background: #f0f0f0; padding: 0; }
.grid td { height: 19px; }
.grid tbody th { height: 19px; }
.grid .cur { background: linear-gradient(#fadcaa, #f2c05c); }
.grid tbody .cur { background: #ffd38a; }
.grid .r { text-align: right; }
.grid .c { text-align: center; }
.grid input {
  appearance: none;
  display: block;
  width: 13px;
  height: 13px;
  margin: 0 auto;
  border: 1px solid #333;
  background: #fff;
}
.bill { width: 1479px; }
.bill col { width: 81px; }
.bill col:nth-child(1) { width: 35px; }
.bill col:nth-child(2) { width: 51px; }
.bill col:nth-child(3) { width: 29px; }
.bill col:nth-child(4) { width: 228px; }
.bill col:nth-child(5) { width: 201px; }
.bill col:nth-child(6) { width: 42px; }
.bill col:nth-child(7) { width: 57px; }
.bill col:nth-child(10), .bill col:nth-child(11) { width: 75px; }
.bill col:nth-child(14) { width: 119px; }
.bill .all td { background: #dee6f0; font-weight: bold; }
.bill .all .m { font-size: 12px; }
.bill .part td { background: #e1f3ff; }
.bill .item td { background: #a9dcfb; }
.bill .quota td, .bill .quota th { height: 20px; }
.bill .hint td:nth-child(4) { color: #777; }
.bill .item .sel { background: #8fccf5; outline: 3px solid #808080; outline-offset: -1px; }

/* outline column: guides, expanders, level mark */
.grid .tree { padding: 0; }
.node { display: flex; align-items: center; height: 18px; }
.quota .node { height: 19px; }
.node i { align-self: stretch; width: 9px; border-right: 1px solid #bfbfbf; }
.node i + i { width: 10px; }
.node s { width: 3px; height: 1px; background: #bfbfbf; }
.node button { width: 13px; height: 13px; border: 1px solid #bfbfbf; background: #fff; display: flex; }
.node svg { width: 11px; height: 11px; stroke: #000; }
.all .node button { margin-left: 2px; }
.node .m { margin-left: 4px; }
.leaf { align-self: stretch; margin-left: 9px; width: 17px; background: linear-gradient(#bfbfbf, #bfbfbf) 0 9px / 100% 1px no-repeat, linear-gradient(#bfbfbf, #bfbfbf) 0 0 / 1px 100% no-repeat; }
.leaf.last { background-size: 100% 1px, 1px 9px; }

/* lower pane */
.lower { position: relative; height: 30px; flex: none; display: flex; align-items: flex-end; padding-bottom: 2px; }
.hsplit { position: absolute; left: 47%; top: 1px; width: 100px; height: 6px; border: 1px solid #777; background: #f4f4f4; }
.lowtabs { display: flex; height: 20px; }
.lowtabs button { padding: 0 10px; border-right: 2px solid #a8a8a8; }
.lowtabs button:first-child { padding-left: 8px; }
.lowtabs .on {
  margin: 0 4px;
  padding: 0 4px;
  border: 1px solid #fff;
  border-top: 2px solid #777;
  border-left: 2px solid #777;
  background: #f8f8f8;
}
.lowtabs .on + button { border-left: 2px solid #a8a8a8; }
.detail { flex: 1; min-height: 0; display: flex; }
.detailbox { flex: 1; min-width: 0; overflow: hidden; background: #fff; border: 1px solid #a6a6a6; padding-top: 1px; }
.fee { width: 644px; }
.fee col:nth-child(1) { width: 22px; }
.fee col:nth-child(2) { width: 49px; }
.fee col:nth-child(3) { width: 55px; }
.fee col:nth-child(4) { width: 121px; }
.fee col:nth-child(5) { width: 102px; }
.fee col:nth-child(6) { width: 57px; }
.fee col:nth-child(7), .fee col:nth-child(8) { width: 65px; }
.fee td:nth-child(2) { padding-right: 13px; }
.fee tr:first-child td:nth-child(2) { background: #d8e9f8; }
.fee .y { background: #ffffc0; }
.actions { width: 128px; flex: none; padding: 8px 21px 0 20px; display: flex; flex-direction: column; gap: 7px; }
.actions button { height: 23px; border: 1px solid #adadad; background: #e1e1e1; }
.actions button:disabled { background: #ccc; border-color: #bfbfbf; color: #838383; }
.actions div { display: flex; justify-content: space-between; }
.actions div button { width: 38px; }

/* status line and desktop bar */
.status {
  flex: none;
  height: 22px;
  display: grid;
  grid-template-columns: 409fr 410fr 334fr 256fr 256fr 255fr;
  gap: 2px;
  padding-top: 2px;
}
.status > span { border: 1px solid #d2d2d2; background: linear-gradient(#fff, #f0f0f0); padding-left: 1px; line-height: 18px; white-space: nowrap; overflow: hidden; }
.taskbar { flex: none; height: 8px; background: #04070a; display: flex; overflow: hidden; color: #fff; padding-left: 48px; }
.taskbar .win { width: 344px; background: #f0f0f0; }
.taskbar .act { width: 48px; margin-left: 444px; background: #34383c; }
.taskbar time { margin-left: auto; width: 39px; margin-right: 65px; line-height: 16px; }

/* floating input method bar */
.ime {
  position: fixed;
  right: 0;
  bottom: 52px;
  height: 25px;
  display: flex;
  align-items: center;
  background: #fff;
  border: 1px solid #a9c6de;
  padding-right: 1px;
}
.ime .logo { width: 28px; height: 28px; margin: -2px 2px 0 -14px; }
.ime button { width: 22px; display: flex; justify-content: center; }
.ime .ic { width: 16px; height: 16px; }
.ime .zh { color: #1c74cc; font-weight: bold; font-size: 14px; }
.acct { position: relative; }
.acct b { position: absolute; left: 8px; top: 7px; background: #fff; color: #1c74cc; font-size: 9px; line-height: 9px; }
```
FILE: app.js
```js
// Bill of quantities: [kind, no., name, unit, qty, rate, total, price, base, mgmt, profit, file, trade, filter]
const J = '建筑工程', Z = '装饰工程';
const bill = [
  ['all', '', '整个项目', '', '', '', '5476968.92', '', '', '', '', '', '', ''],
  ['part', 'B1', '1#2', '', '', '', '3030768.9', '', '', '', '', `[${J}]`, '', ''],
  ['open', '1', '挖一般土方', 'm3', '14695.22', '3', '44085.66', '', '0.57', '0.15', '0.09', J, J, ''],
  ['last', '', '挖掘机挖一般土方 普通土', '10m3', '1469.522', '29.89', '43924.01', '27.57', '', '1.46', '0.86', `[${J}]`, J, '无'],
  ['open', '2', '回填方', 'm3', '12531.12', '12.62', '158142.73', '', '7.31', '1.87', '1.1', J, J, ''],
  ['mid', '', '机械夯填地坪', '10m3', '1253.112', '126.28', '158242.98', '96.58', '', '18.73', '10.97', `[${J}]`, J, '无'],
  ['last hint', '', '自动提示: 请输入名称简称', '', '0', '0', '0', '0', '', '0', '0', `[${J}]`, '', '无'],
];
[
  ['余方弃置', 'm3', '2164.1', '6.13', '13265.93', '0.29', '0.07', '0.04', J],
  ['地上 MU10烧结煤矸石砖 M7.5混合砂浆', 'm3', '1191.6', '500.76', '596705.62', '120.84', '30.94', '18.13', J],
  ['地下 MU15烧结煤矸石砖 M7.5水泥砂浆', 'm3', '33.03', '24.95', '824.1', '5.93', '1.52', '0.89', J],
  ['独立基础', 'm3', '209.47', '750.55', '157217.71', '95.24', '24.38', '14.29', J],
  ['垫层', 'm3', '100.28', '700.56', '70252.16', '108.58', '27.8', '16.29', J],
  ['基础梁', 'm3', '145.79', '1111.02', '161975.61', '227.58', '58.26', '34.14', J],
  ['圈梁', 'm3', '37', '1366.05', '50543.85', '430.68', '110.25', '64.6', J],
  ['压顶', 'm3', '52.93', '1340.58', '70956.9', '428.48', '109.69', '64.27', J],
  ['矩形柱', 'm3', '57.88', '1044.92', '60479.97', '278.59', '71.32', '41.79', J],
  ['构造柱', 'm3', '150.07', '1571.42', '235823', '496.09', '127', '74.41', J],
  ['水泥砂浆楼地面', 'm2', '6702.82', '107.25', '718877.45', '25.29', '8.14', '4.38', Z],
  ['墙面一般抹灰', 'm2', '5103.94', '28.76', '146789.31', '14.11', '4.54', '2.44', Z],
  ['墙面喷刷涂料', 'm2', '5103.94', '14.64', '74721.68', '5.56', '1.79', '0.96', Z],
  ['HRB400 ф6', 't', '10.571', '6367.37', '67309.47', '1205.55', '308.62', '180.83', J],
  ['HRB400 ф8', 't', '9.963', '5225.33', '52059.96', '1205.55', '308.62', '180.83', J],
  ['HRB400 ф12', 't', '9.47', '5225.33', '49483.88', '1205.55', '308.62', '180.83', J],
  ['HRB400 ф14', 't', '17.52', '5011.06', '87793.77', '924.35', '236.63', '138.65', J],
  ['HRB400 ф16', 't', '2.173', '5011.06', '10889.03', '924.35', '236.63', '138.65', J],
  ['HRB400 ф18', 't', '3.732', '5011.06', '18701.28', '924.35', '236.63', '138.65', J],
].forEach(([name, unit, qty, rate, total, base, mgmt, profit, trade], i) => {
  bill.push(['closed', String(i + 3), name, unit, qty, rate, total, '', base, mgmt, profit, trade, trade, '']);
});

// Unit price make-up of the current row
const fee = [
  ['A', '直接费', 'A1+A2+A3+A4', '', '21.78', '111163.81'],
  ['A1', '人工费', 'RGF', '', '14.11', '72016.59'],
  ['A2', '材料费', 'CLF', '', '7.32', '37360.84'],
  ['A3', '机械费', 'JXF', '', '0.35', '1786.38'],
  ['A4', '主材费', 'ZCF', '', '0', '0'],
  ['B', '管理费', 'SRGF', '32.2', '4.54', '23171.89'],
  ['C', '利润', 'SRGF', '17.3', '2.44', '12453.61'],
  ['D', '综合单价', 'A+B+C', '', '28.76', '146789.31'],
];

// Half-width runs use the fixed-pitch face; the bar diameter sign takes a full cell
const mono = s => s
  .replace(/[\x20-\x7e]+/g, t => `<span class="m">${t}</span>`)
  .replace('ф', '<span class="w">ф</span>');
const td = (s, cls = '') => `<td class="${cls}">${mono(s)}</td>`;

const toggle = open => `<button aria-label="${open ? '折叠' : '展开'}"><svg viewBox="0 0 11 11"><path d="M2 5.500h7${open ? '' : 'M5.500 2v7'}"/></svg></button>`;
const zero = '<span class="m">0</span>';
const outline = {
  all: toggle(true),
  part: '<i></i><s></s>' + toggle(true),
  open: '<i></i><i></i><s></s>' + toggle(true) + zero,
  closed: '<i></i><i></i><s></s>' + toggle(false) + zero,
  mid: '<i></i><i></i><span class="leaf"></span>',
  last: '<i></i><i></i><span class="leaf last"></span>',
};
const rowClass = { all: 'all', part: 'part', open: 'item', closed: 'item', mid: 'quota', last: 'quota' };
const category = { all: '', part: '部', item: '项', quota: '定' };

document.getElementById('bill').innerHTML = bill.map(([kind, no, name, unit, qty, rate, total, price, base, mgmt, profit, file, trade, filter]) => {
  const [shape, extra = ''] = kind.split(' ');
  const cls = rowClass[shape];
  const current = no === '14';
  return `<tr class="${cls} ${extra}"><th class="${current ? 'cur' : ''}">${mono(no)}</th>`
    + `<td class="tree"><div class="node">${outline[shape]}</div></td>`
    + td(category[cls], 'c') + td(name) + td('') + td(unit)
    + td(qty, 'r') + td(rate, 'r') + td(total, 'r') + td(price, 'r')
    + td(base, current ? 'r sel' : 'r') + td(mgmt, 'r') + td(profit, 'r') + td(file, 'r') + td(trade, 'r')
    + `<td>${cls === 'quota' ? '' : `<input type="checkbox" aria-label="锁定综合单价 ${name}">`}</td>`
    + td(filter) + '</tr>';
}).join('');

document.getElementById('fee').innerHTML = fee.map(([code, name, basis, rate, price, total], i) =>
  `<tr><th class="${i ? '' : 'cur'}">${mono(String(i + 1))}</th>`
  + td(String(i + 1), 'r') + td(code) + td(name) + td(basis) + td(rate, 'r') + td(price, 'r y') + td(total, 'r y') + td('') + '</tr>'
).join('');
```
